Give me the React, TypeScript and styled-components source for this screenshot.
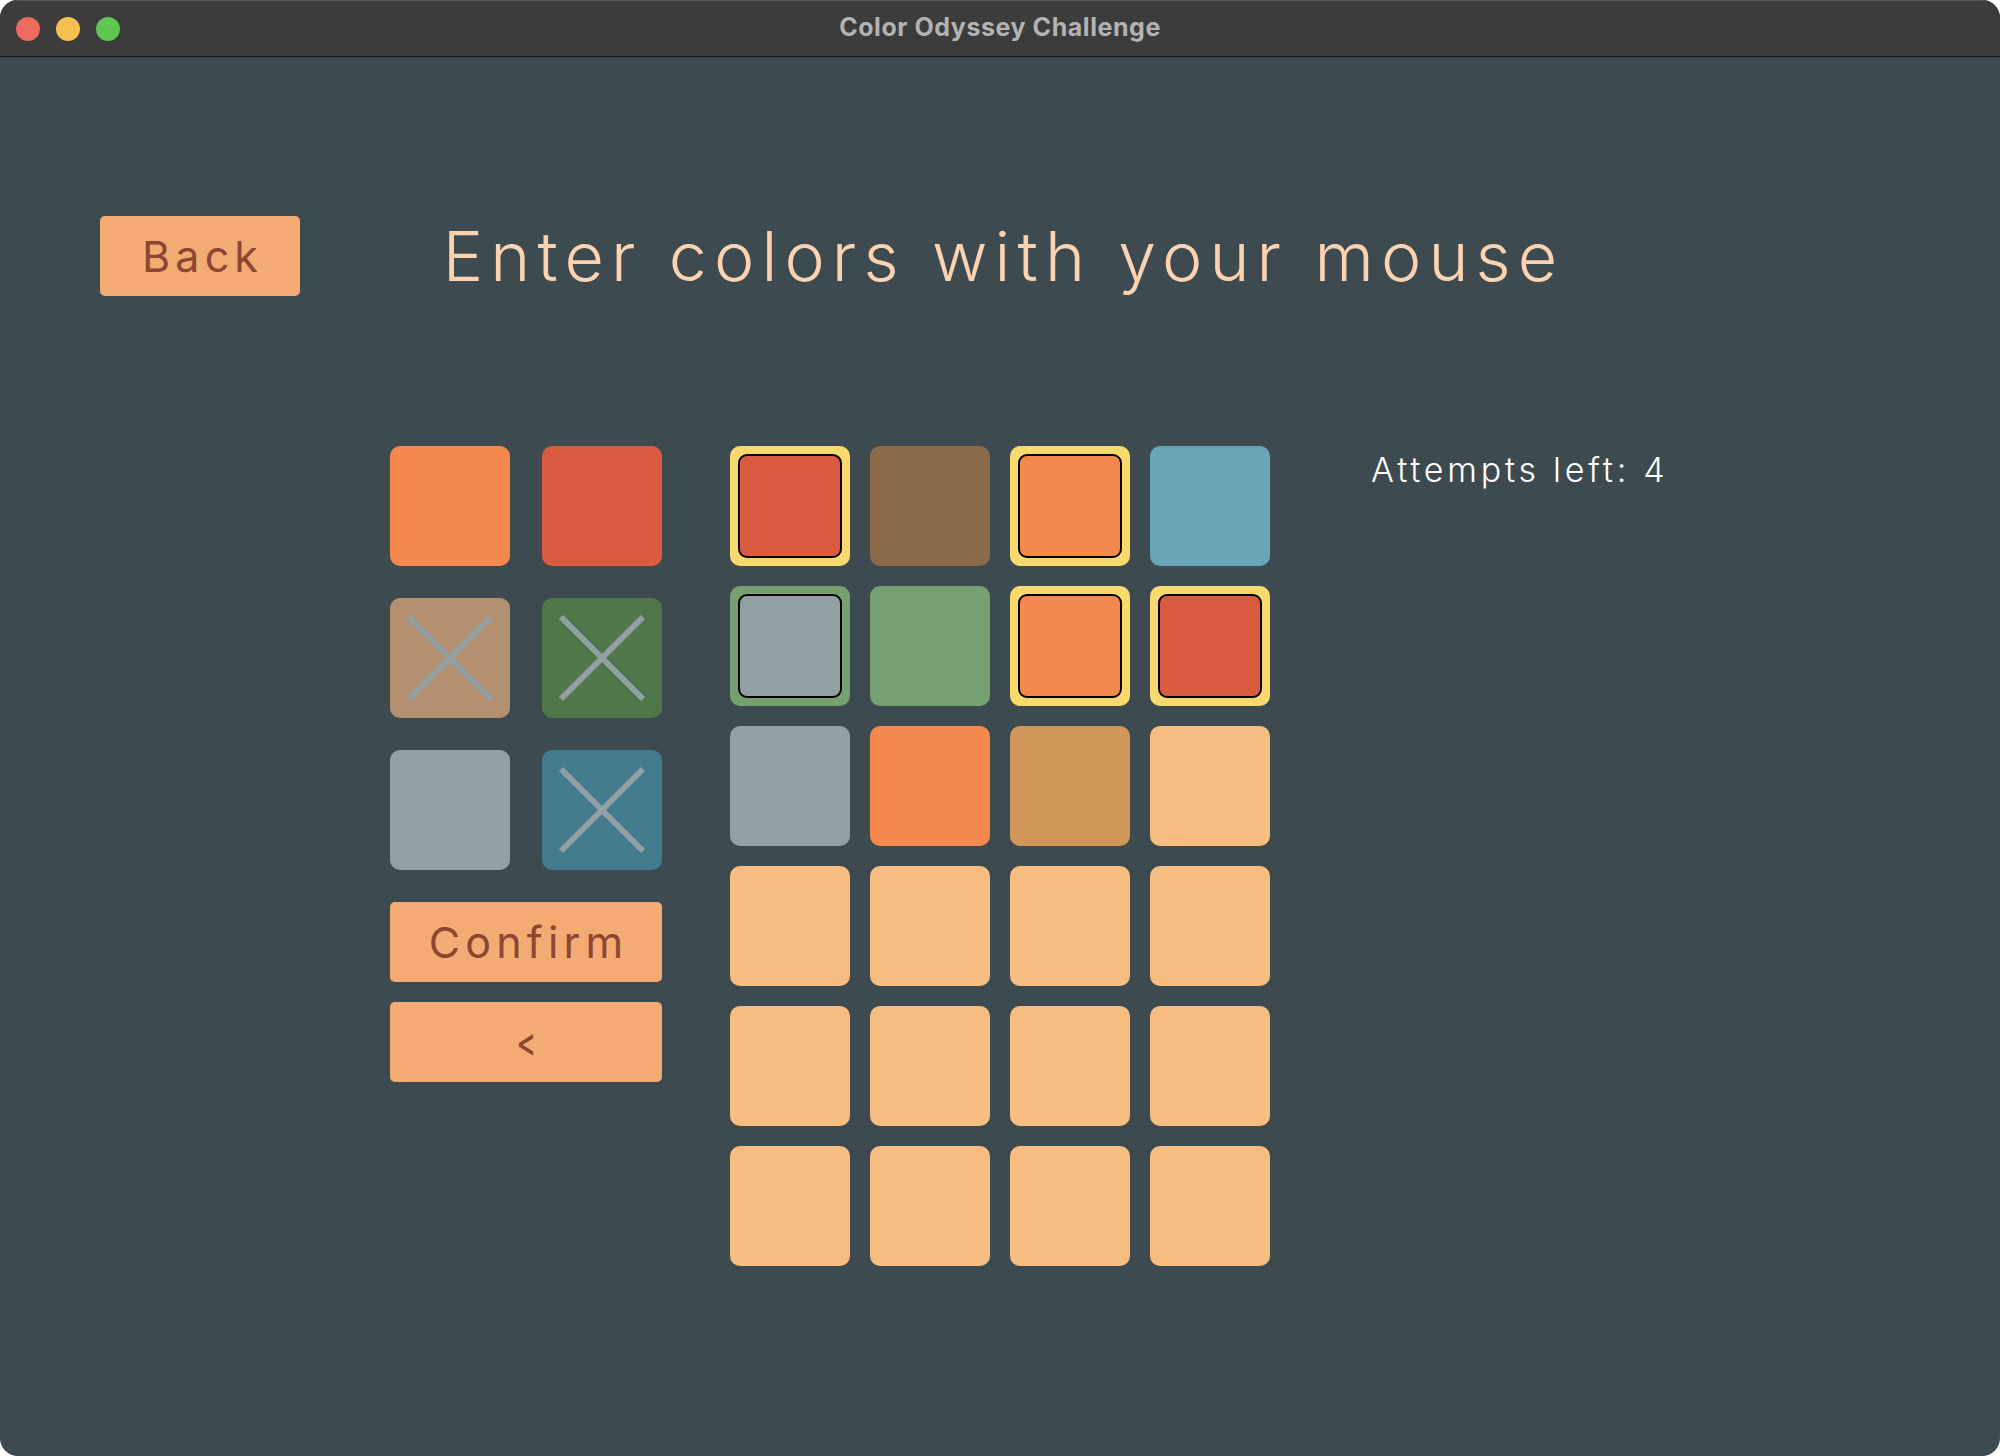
import React from "react";
import styled, { createGlobalStyle } from "styled-components";

const GlobalStyle = createGlobalStyle`
  html, body {
    margin: 0;
    padding: 0;
    background: #ffffff;
  }
  body {
    font-family: Inter, "Noto Sans", sans-serif;
  }
`;

const Window = styled.div`
  width: 2000px;
  height: 1456px;
  border-radius: 18px;
  overflow: hidden;
  display: flex;
  flex-direction: column;
  background: #3d4b50;
`;

const TitleBar = styled.div`
  background: #3c3c3c;
  border-top: 1px solid #575757;
  box-sizing: border-box;
  border-bottom: 1px solid #161616;
  height: 57px;
  flex: 0 0 57px;
  display: grid;
  grid-template-columns: 1fr auto 1fr;
  align-items: center;
`;

const Lights = styled.div`
  display: flex;
  gap: 16px;
  padding-left: 16px;
`;

const Light = styled.span<{ $c: string }>`
  width: 24px;
  height: 24px;
  border-radius: 50%;
  background: ${(p) => p.$c};
`;

const WindowTitle = styled.div`
  font-family: Inter, sans-serif;
  font-weight: 700;
  font-size: 25px;
  letter-spacing: 0.55px;
  color: #b3b3b3;
  line-height: 1;
  padding-bottom: 2px;
`;

const Content = styled.div`
  flex: 1;
  padding-top: 159px;
`;

const Header = styled.div`
  display: grid;
  grid-template-columns: 1fr auto 1fr;
  align-items: center;
`;

const ActionButton = styled.button<{ $w: number }>`
  width: ${(p) => p.$w}px;
  height: 80px;
  border: none;
  border-radius: 5px;
  background: #f4ab73;
  color: #8e4532;
  font-family: Inter, sans-serif;
  font-weight: 400;
  font-size: 43px;
  letter-spacing: 0.12em;
  padding: 0 0 0 0.12em;
  line-height: 1;
  display: flex;
  align-items: center;
  justify-content: center;
  cursor: pointer;
`;

const BackWrap = styled.div`
  padding-left: 100px;
`;

const Heading = styled.h1`
  margin: 0;
  font-family: Inter, sans-serif;
  font-weight: 300;
  font-size: 68px;
  line-height: 1;
  letter-spacing: 0.105em;
  padding-left: 0.105em;
  color: #fcd3b1;
`;

const Main = styled.div`
  margin-top: 150px;
  display: grid;
  grid-template-columns: 1fr 540px 1fr;
  align-items: start;
`;

const Palette = styled.div`
  justify-self: end;
  margin-right: 68px;
  width: 272px;
  display: flex;
  flex-direction: column;
`;

const PaletteGrid = styled.div`
  display: grid;
  grid-template-columns: 120px 120px;
  gap: 32px;
`;

const Board = styled.div`
  display: grid;
  grid-template-columns: repeat(4, 120px);
  grid-auto-rows: 120px;
  gap: 20px;
`;

const Tile = styled.div<{ $c: string; $ring?: string }>`
  width: 120px;
  height: 120px;
  box-sizing: border-box;
  border-radius: 10px;
  background: ${(p) => p.$ring ?? p.$c};
  padding: ${(p) => (p.$ring ? "8px" : "0")};
  display: flex;
`;

const Inner = styled.div<{ $c: string }>`
  flex: 1;
  border: 2px solid #000;
  border-radius: 9px;
  background: ${(p) => p.$c};
`;

const Cross = styled.svg`
  width: 120px;
  height: 120px;
`;

const ConfirmRow = styled.div`
  margin-top: 32px;
`;

const UndoRow = styled.div`
  margin-top: 20px;
`;

const Chevron = styled.span`
  display: inline-block;
  font-size: 40px;
  font-weight: 500;
  letter-spacing: 0;
  line-height: 1;
  margin-left: -0.1em;
  transform: scaleX(0.75);
`;

const Attempts = styled.div`
  margin-left: 101px;
  margin-top: 7px;
  font-family: Inter, sans-serif;
  font-weight: 300;
  font-size: 34px;
  line-height: 1;
  letter-spacing: 0.11em;
  color: #ffffff;
  white-space: nowrap;
`;

const C = {
  orange: "#f4894d",
  red: "#d95b41",
  tan: "#b39170",
  darkGreen: "#4f7749",
  gray: "#92a0a4",
  teal: "#417b8d",
  brown: "#8b6a4a",
  lightBlue: "#68a5b6",
  green: "#76a070",
  ochre: "#d29659",
  peach: "#f8be81",
  yellow: "#f8d96e",
};

const palette: { c: string; used: boolean }[] = [
  { c: C.orange, used: false },
  { c: C.red, used: false },
  { c: C.tan, used: true },
  { c: C.darkGreen, used: true },
  { c: C.gray, used: false },
  { c: C.teal, used: true },
];

type Cell = { c: string; ring?: string };

const board: Cell[] = [
  { c: C.red, ring: C.yellow },
  { c: C.brown },
  { c: C.orange, ring: C.yellow },
  { c: C.lightBlue },
  { c: C.gray, ring: C.green },
  { c: C.green },
  { c: C.orange, ring: C.yellow },
  { c: C.red, ring: C.yellow },
  { c: C.gray },
  { c: C.orange },
  { c: C.ochre },
  { c: C.peach },
  ...Array.from({ length: 12 }, () => ({ c: C.peach })),
];

export default function App() {
  return (
    <>
      <GlobalStyle />
      <Window>
        <TitleBar>
          <Lights>
            <Light $c="#ec6a5e" />
            <Light $c="#f4bf4f" />
            <Light $c="#61c554" />
          </Lights>
          <WindowTitle>Color Odyssey Challenge</WindowTitle>
          <div />
        </TitleBar>
        <Content>
          <Header>
            <BackWrap>
              <ActionButton $w={200}>Back</ActionButton>
            </BackWrap>
            <Heading>Enter colors with your mouse</Heading>
            <div />
          </Header>
          <Main>
            <Palette>
              <PaletteGrid>
                {palette.map((p, i) => (
                  <Tile key={i} $c={p.c}>
                    {p.used && (
                      <Cross viewBox="0 0 120 120">
                        <line x1="19" y1="19" x2="101" y2="101" stroke={C.gray} strokeWidth="6" />
                        <line x1="101" y1="19" x2="19" y2="101" stroke={C.gray} strokeWidth="6" />
                      </Cross>
                    )}
                  </Tile>
                ))}
              </PaletteGrid>
              <ConfirmRow>
                <ActionButton $w={272}>Confirm</ActionButton>
              </ConfirmRow>
              <UndoRow>
                <ActionButton $w={272}>
                  <Chevron>&lt;</Chevron>
                </ActionButton>
              </UndoRow>
            </Palette>
            <Board>
              {board.map((cell, i) => (
                <Tile key={i} $c={cell.c} $ring={cell.ring}>
                  {cell.ring && <Inner $c={cell.c} />}
                </Tile>
              ))}
            </Board>
            <Attempts>Attempts left: 4</Attempts>
          </Main>
        </Content>
      </Window>
    </>
  );
}
